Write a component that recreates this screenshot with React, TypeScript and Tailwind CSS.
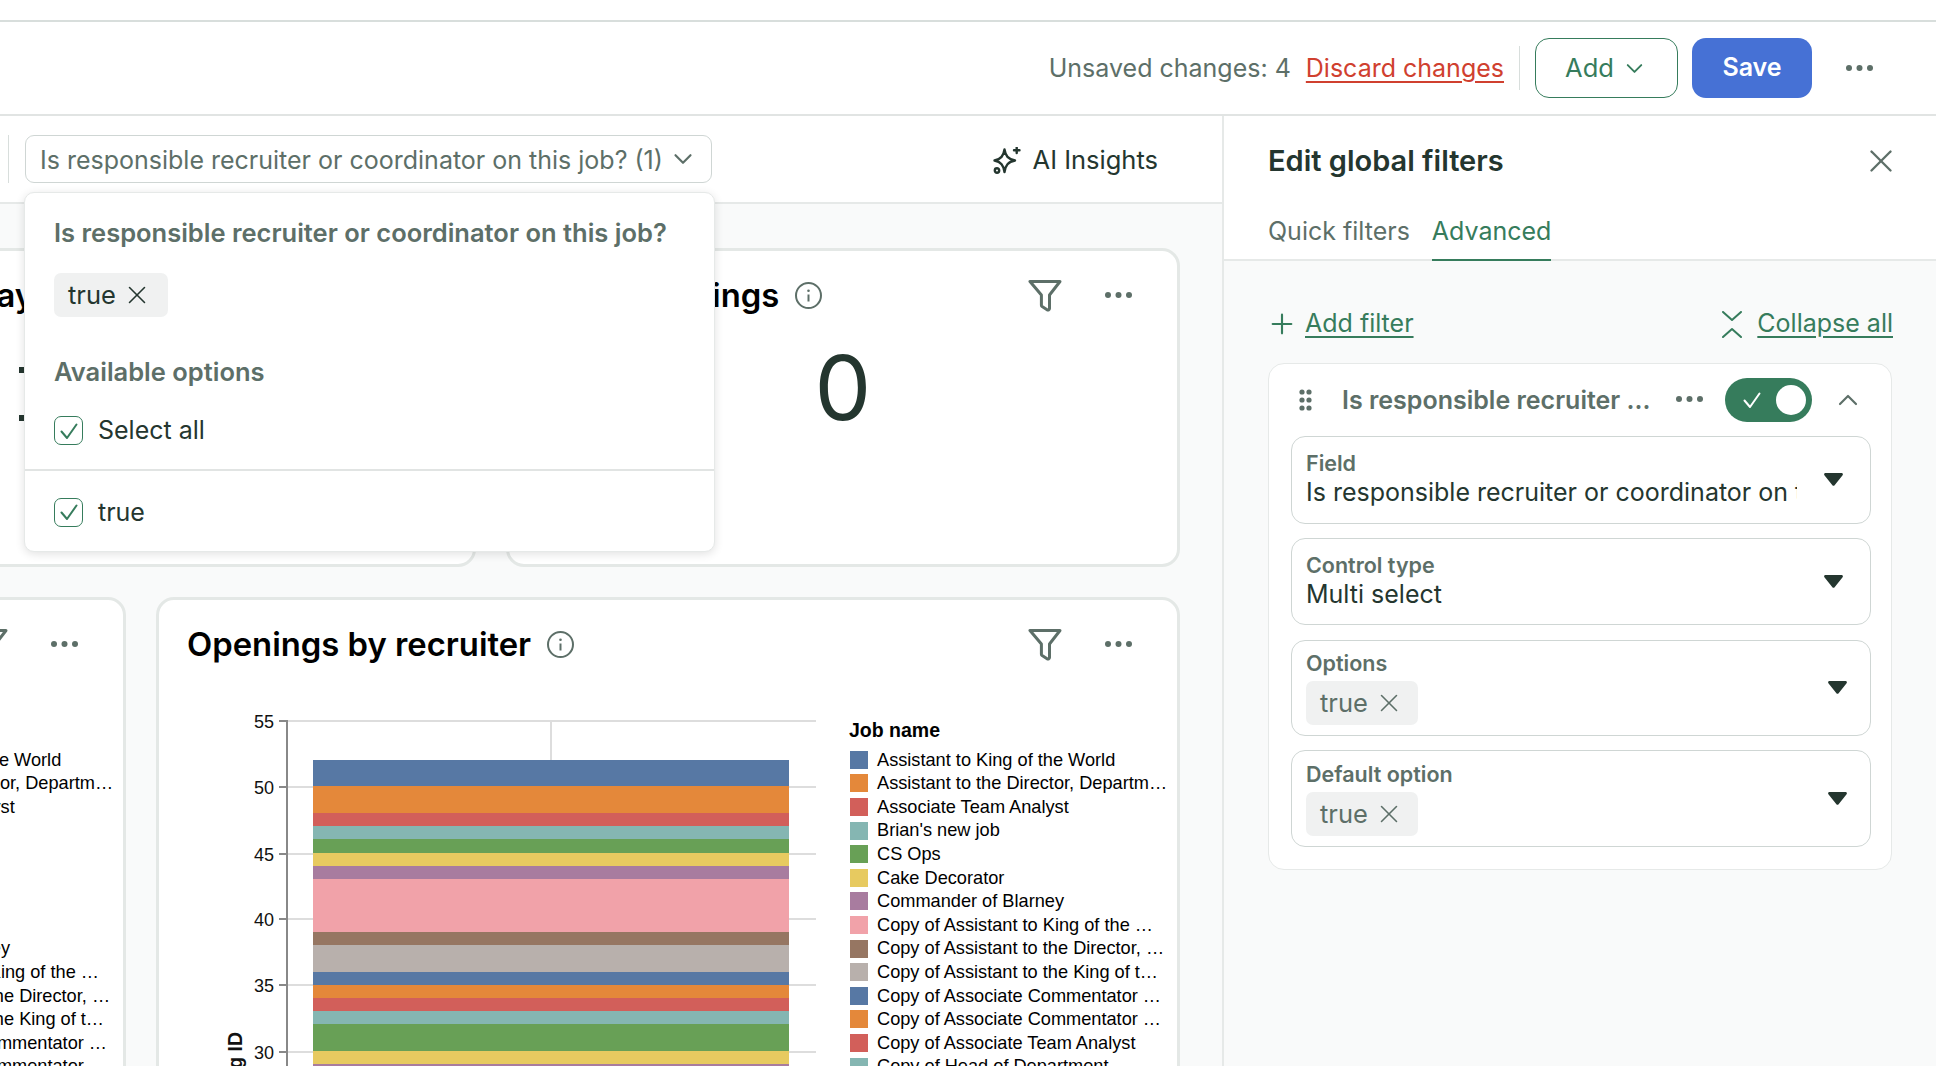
import React from 'react';
import { ChevronDown, ChevronUp, Plus, X } from 'lucide-react';

const sans = "font-['Inter',sans-serif]";
const chartFont = "font-['Liberation_Sans',Arial,sans-serif]";

const palette = ['#5778a4', '#e4883a', '#d25f5a', '#85b6b2', '#68a056', '#e7ca60', '#a87c9f', '#f1a2a9', '#967662', '#b8b0ac'];

// y position of each stacked segment edge, in page pixels
const barEdges = [760, 786, 813, 826, 839, 853, 866, 879, 932, 945, 972, 985, 998, 1011, 1024, 1051, 1064, 1090];
const ticks = [
  { label: '55', y: 721 },
  { label: '50', y: 787 },
  { label: '45', y: 854 },
  { label: '40', y: 919 },
  { label: '35', y: 985 },
  { label: '30', y: 1052 },
];

const rightLegend = [
  'Assistant to King of the World',
  'Assistant to the Director, Departm…',
  'Associate Team Analyst',
  "Brian's new job",
  'CS Ops',
  'Cake Decorator',
  'Commander of Blarney',
  'Copy of Assistant to King of the …',
  'Copy of Assistant to the Director, …',
  'Copy of Assistant to the King of t…',
  'Copy of Associate Commentator …',
  'Copy of Associate Commentator …',
  'Copy of Associate Team Analyst',
  'Copy of Head of Department',
];

const leftLegend = [
  'Assistant to King of the World',
  'Assistant to the Director, Departm…',
  'Associate Team Analyst',
  "Brian's new job",
  'CS Ops',
  'Cake Decorator',
  'Chef',
  'Clerk',
  'Commander of Blarney',
  'Copy of Assistant to King of the …',
  'Copy of Assistant to the Director, …',
  'Copy of Assistant to the King of t…',
  'Copy of Associate Commentator …',
  'Copy of Associate Commentator …',
];

const Dots = () => (
  <svg width="27" height="6" viewBox="0 0 27 6" className="shrink-0 fill-[#5d6f68]">
    <circle cx="3" cy="3" r="3" />
    <circle cx="13.5" cy="3" r="3" />
    <circle cx="24" cy="3" r="3" />
  </svg>
);

const Funnel = () => (
  <svg width="34" height="33" viewBox="0 0 34 33" fill="none" className="shrink-0 stroke-[#5d6f68]" strokeWidth="3" strokeLinejoin="round">
    <path d="M2 2.5h30L21.5 16v13.5c0 1.3-1.4 2-2.4 1.3l-5-3.2a1.6 1.6 0 0 1-.7-1.3V16L2 2.5z" />
  </svg>
);

const Info = () => (
  <svg width="27" height="27" viewBox="0 0 27 27" fill="none" className="shrink-0">
    <circle cx="13.5" cy="13.5" r="12.5" stroke="#5d6f68" strokeWidth="2" />
    <circle cx="13.5" cy="8.700" r="1.3" fill="#5d6f68" />
    <path d="M13.5 12.500v7" stroke="#5d6f68" strokeWidth="2" />
  </svg>
);

const Triangle = () => (
  <svg width="19" height="13" viewBox="0 0 19 13" className="shrink-0 fill-[#24362f]">
    <path d="M1.5 0h16c1.2 0 1.8 1.2 1.1 2.2l-8 10c-.6.8-1.6.8-2.2 0l-8-10C-.3 1.2.3 0 1.5 0z" />
  </svg>
);

const Sparkle = () => (
  <svg width="28" height="27" viewBox="0 -1 28 27" fill="none" className="shrink-0 stroke-[#24362f]" strokeWidth="2.400" strokeLinejoin="round" strokeLinecap="round">
    <path d="M11.500 1.500C12.500 8 15 11 22 12.500 15 14 12.500 17 11.500 24 10.500 17 8 14 1.500 12.500 8 11 10.500 8 11.500 1.500z" />
    <path d="M23.700-.5v5.600M21 2.300h5.500" />
    <circle cx="4" cy="22.500" r="2.200" />
  </svg>
);

const Check = ({ color = '#367c5c', size = 20 }: { color?: string; size?: number }) => (
  <svg width={size} height={size} viewBox="0 0 20 20" fill="none" stroke={color} strokeWidth="2" strokeLinecap="round" strokeLinejoin="round">
    <path d="M2.500 10.500 8 17 17.500 3.500" />
  </svg>
);

const Checkbox = () => (
  <span className="flex h-[29px] w-[29px] shrink-0 items-center justify-center rounded-[7px] border-[1.5px] border-[#367c5c] bg-white">
    <Check />
  </span>
);

const Chip = ({ dark, wide }: { dark?: boolean; wide?: boolean }) => (
  <span className={`flex h-[44px] items-center gap-[6px] rounded-[7px] bg-[#f0f1f1] pl-[14px] text-[25.5px] ${wide ? 'w-[114px]' : 'w-[112px]'} ${dark ? 'text-[#24362f]' : 'text-[#5d6f68]'}`}>
    true
    <X size={30} strokeWidth={1.25} />
  </span>
);

const CardHeader = ({ title, pad }: { title: string; pad: string }) => (
  <div className={`flex h-[88px] shrink-0 items-center pr-[45px] ${pad}`}>
    <h3 className="text-[32.8px] leading-none font-semibold whitespace-nowrap text-black">{title}</h3>
    <span className="ml-4">
      <Info />
    </span>
    <span className="mr-[43px] ml-auto">
      <Funnel />
    </span>
    <Dots />
  </div>
);

const Legend = ({ items }: { items: string[] }) => (
  <div className={`w-[328px] shrink-0 pt-[32px] text-[18.2px] leading-none text-black ${chartFont}`}>
    <div className="mb-[6px] flex h-[22px] items-center text-[19.5px] font-bold">Job name</div>
    {items.map((item, i) => (
      <div key={i} className="flex h-[23.6px] items-center gap-[9px] pl-[1px] whitespace-nowrap">
        <span className="h-[18px] w-[18px] shrink-0" style={{ backgroundColor: palette[i % palette.length] }} />
        {item}
      </div>
    ))}
  </div>
);

// svg sits at page x 159, page y 688
const Chart = () => (
  <svg width="690" height="412" viewBox="159 688 690 412" className={`shrink-0 ${chartFont}`}>
    <line x1="551" x2="551" y1="721" y2="760" stroke="#dddddd" strokeWidth="2" />
    {ticks.map((t) => (
      <g key={t.label}>
        <line x1="287" x2="816" y1={t.y} y2={t.y} stroke="#dddddd" strokeWidth="2" />
        <line x1="279" x2="287" y1={t.y} y2={t.y} stroke="#888888" strokeWidth="2" />
        <text x="274" y={t.y + 6.500} textAnchor="end" fontSize="18" fill="#111111">
          {t.label}
        </text>
      </g>
    ))}
    <line x1="287" x2="287" y1="720" y2="1100" stroke="#888888" strokeWidth="2" />
    {barEdges.slice(0, -1).map((y, i) => (
      <rect key={y} x="313" y={y} width="476" height={barEdges[i + 1] - y} fill={palette[i % palette.length]} />
    ))}
    <text transform="translate(242 1032) rotate(-90)" textAnchor="end" fontSize="19.5" fontWeight="700" fill="#111111">
      Count of Opening ID
    </text>
  </svg>
);

const Field = ({ label, height, children, arrowClass, pad = 'pb-[4px]' }: { label: string; height: string; children: React.ReactNode; arrowClass: string; pad?: string }) => (
  <div className={`flex items-center rounded-[14px] border border-[#cfd6d4] bg-white pl-[14px] ${height}`}>
    <div className={`min-w-0 flex-1 ${pad}`}>
      <div className="text-[21.5px] leading-[28px] font-semibold text-[#5d6f68]">{label}</div>
      {children}
    </div>
    <span className={arrowClass}>
      <Triangle />
    </span>
  </div>
);

export default function App() {
  return (
    <div className={`flex h-[1066px] w-[1936px] flex-col overflow-hidden bg-white text-[#24362f] ${sans}`}>
      {/* top bar */}
      <div className="mt-5 flex h-[96px] shrink-0 items-center justify-end border-y-2 border-t-[#d8dedc] border-b-[#e1e4e3] pr-[63px]">
        <span className="pt-px text-[25px] text-[#5d6f68]">Unsaved changes: 4</span>
        <a className="ml-[15px] pt-px text-[25px] text-[#d0402f] underline underline-offset-4">Discard changes</a>
        <span className="mx-[15px] h-[44px] w-px bg-[#d8dedc]" />
        <button className="flex h-[60px] w-[143px] items-center justify-center gap-[7px] rounded-[14px] border border-[#367c5c] text-[25.5px] text-[#367c5c]">
          Add
          <ChevronDown size={27} strokeWidth={1.7} />
        </button>
        <button className="ml-[14px] h-[60px] w-[120px] rounded-[14px] bg-[#4671d5] text-[25px] font-semibold text-white">Save</button>
        <span className="ml-[34px]">
          <Dots />
        </span>
      </div>

      <div className="flex min-h-0 flex-1">
        {/* dashboard */}
        <div className="relative flex w-[1224px] shrink-0 flex-col border-r-2 border-[#e6e9e8] bg-[#f9fafa]">
          <div className="flex h-[88px] shrink-0 items-center border-b-2 border-[#e6e9e8] bg-white pl-2">
            <span className="h-[48px] w-px bg-[#d8dedc]" />
            <div className="ml-4 flex h-[48px] w-[687px] items-center justify-between rounded-[9px] border border-[#cfd6d4] pr-[13px] pl-[14px] text-[25px] whitespace-nowrap text-[#5d6f68]">
              <span className="pt-[4px]">Is responsible recruiter or coordinator on this job? (1)</span>
              <ChevronDown size={30} strokeWidth={1.75} />
            </div>
            <div className="mr-[64px] ml-auto flex items-center gap-[12px] pt-[2px] text-[25.5px]">
              <Sparkle />
              AI Insights
            </div>
          </div>

          {/* cards */}
          <div className="flex min-h-0 flex-col gap-[30px] pt-[44px]">
            <div className="flex h-[319px] shrink-0 gap-[30px] pr-[42px]">
              <div className="ml-[-126px] w-[602px] shrink-0 rounded-[18px] border-[3px] border-[#e4e8e6] bg-white">
                <CardHeader title="Today" pad="pl-[60px]" />
                <div className="mt-[28px] ml-[142px] flex flex-col gap-[42px]">
                  <span className="h-[6px] w-[5px] bg-[#24362f]" />
                  <span className="h-[6px] w-[5px] bg-[#24362f]" />
                </div>
              </div>
              <div className="flex flex-1 flex-col rounded-[18px] border-[3px] border-[#e4e8e6] bg-white">
                <CardHeader title="Filled openings" pad="pl-[30px]" />
                <div className="mt-[4px] text-center text-[90px] leading-none font-normal">0</div>
              </div>
            </div>

            <div className="flex h-[500px] shrink-0 gap-[30px] pr-[42px]">
              <div className="ml-[-276px] w-[402px] shrink-0 rounded-[18px] border-[3px] border-[#e4e8e6] bg-white">
                <CardHeader title="Jobs" pad="pl-[28px]" />
                <div className="flex justify-end">
                  <Legend items={leftLegend} />
                </div>
              </div>
              <div className="flex-1 rounded-[18px] border-[3px] border-[#e4e8e6] bg-white">
                <CardHeader title="Openings by recruiter" pad="pl-[28px]" />
                <div className="flex">
                  <Chart />
                  <Legend items={rightLegend} />
                </div>
              </div>
            </div>
          </div>

          {/* open dropdown */}
          <div className="absolute top-[76px] left-[24px] z-10 h-[360px] w-[691px] rounded-[10px] border border-[#e6e9e8] bg-white shadow-[0_2px_10px_rgba(0,0,0,0.12)]">
            <div className="px-[29px] pt-[22px]">
              <div className="text-[25.5px] leading-[36px] font-semibold text-[#5d6f68]">Is responsible recruiter or coordinator on this job?</div>
              <div className="mt-[22px]">
                <Chip dark wide />
              </div>
              <div className="mt-[37px] text-[25.5px] leading-[36px] font-semibold text-[#5d6f68]">Available options</div>
              <div className="mt-[22px] flex items-center gap-[15px] text-[25px]">
                <Checkbox />
                Select all
              </div>
            </div>
            <div className="mt-[19px] h-[2px] bg-[#e1e4e3]" />
            <div className="mt-[23px] flex items-center gap-[15px] pl-[29px] text-[25px]">
              <Checkbox />
              true
            </div>
          </div>
        </div>

        {/* filter panel */}
        <div className="flex flex-1 flex-col bg-[#f9fafa]">
          <div className="h-[145px] shrink-0 border-b-2 border-[#e6e9e8] bg-white pr-[36px] pl-[44px]">
            <div className="flex h-[90px] items-center justify-between">
              <h2 className="text-[29px] font-semibold">Edit global filters</h2>
              <X size={38} strokeWidth={1.5} className="text-[#5d6f68]" />
            </div>
            <div className="flex h-[55px] gap-[22px] text-[25px]">
              <span className="pt-[7px] text-[#5d6f68]">Quick filters</span>
              <span className="h-[55px] border-b-2 border-[#367c5c] pt-[7px] text-[#367c5c]">Advanced</span>
            </div>
          </div>

          <div className="px-[44px]">
            <div className="flex h-[102px] items-center justify-between pt-[24px] text-[25px] text-[#367c5c]">
              <span className="-ml-[2px] flex items-center gap-[7px]">
                <Plus size={32} strokeWidth={1.6} />
                <span className="underline underline-offset-4">Add filter</span>
              </span>
              <span className="-mr-px flex items-center gap-[15px]">
                <svg width="20" height="27" viewBox="0 0 20 27" fill="none" stroke="#367c5c" strokeWidth="2" strokeLinecap="round" strokeLinejoin="round">
                  <path d="M1 1l9 8 9-8M1 26l9-8 9 8" />
                </svg>
                <span className="underline underline-offset-4">Collapse all</span>
              </span>
            </div>

            <div className="h-[507px] rounded-[16px] border border-[#e6e9e8] bg-white pr-[20px] pl-[22px]">
              <div className="flex h-[72px] items-center pl-[8px]">
                <svg width="13" height="22" viewBox="0 0 13 22" className="shrink-0 fill-[#5d6f68]">
                  <circle cx="3" cy="3" r="2.600" />
                  <circle cx="10" cy="3" r="2.600" />
                  <circle cx="3" cy="11" r="2.600" />
                  <circle cx="10" cy="11" r="2.600" />
                  <circle cx="3" cy="19" r="2.600" />
                  <circle cx="10" cy="19" r="2.600" />
                </svg>
                <span className="ml-[30px] w-[334px] shrink-0 pt-px text-[25px] font-semibold whitespace-nowrap text-[#5d6f68]">Is responsible recruiter ...</span>
                <span className="-mt-[2px]">
                  <Dots />
                </span>
                <span className="relative ml-[22px] flex h-[44px] w-[87px] shrink-0 items-center rounded-full bg-[#367c5c] pl-[17px]">
                  <Check color="#ffffff" />
                  <span className="absolute top-[7px] right-[6px] h-[30px] w-[30px] rounded-full bg-white" />
                </span>
                <ChevronUp size={32} strokeWidth={1.6} className="ml-[20px] text-[#5d6f68]" />
              </div>

              <div className="flex flex-col gap-[14.5px]">
                <Field label="Field" height="h-[87.5px]" arrowClass="mr-[27px]">
                  <div className="w-[491px] overflow-hidden text-[25px] leading-[30px] whitespace-nowrap">Is responsible recruiter or coordinator on this job?</div>
                </Field>
                <Field label="Control type" height="h-[87px]" arrowClass="mr-[27px]">
                  <div className="text-[25px] leading-[30px]">Multi select</div>
                </Field>
                <Field label="Options" height="h-[96px]" arrowClass="mr-[23px]" pad="pb-px">
                  <div className="mt-[4px]">
                    <Chip />
                  </div>
                </Field>
                <Field label="Default option" height="h-[97px]" arrowClass="mr-[23px]" pad="pb-px">
                  <div className="mt-[4px]">
                    <Chip />
                  </div>
                </Field>
              </div>
            </div>
          </div>
        </div>
      </div>
    </div>
  );
}
